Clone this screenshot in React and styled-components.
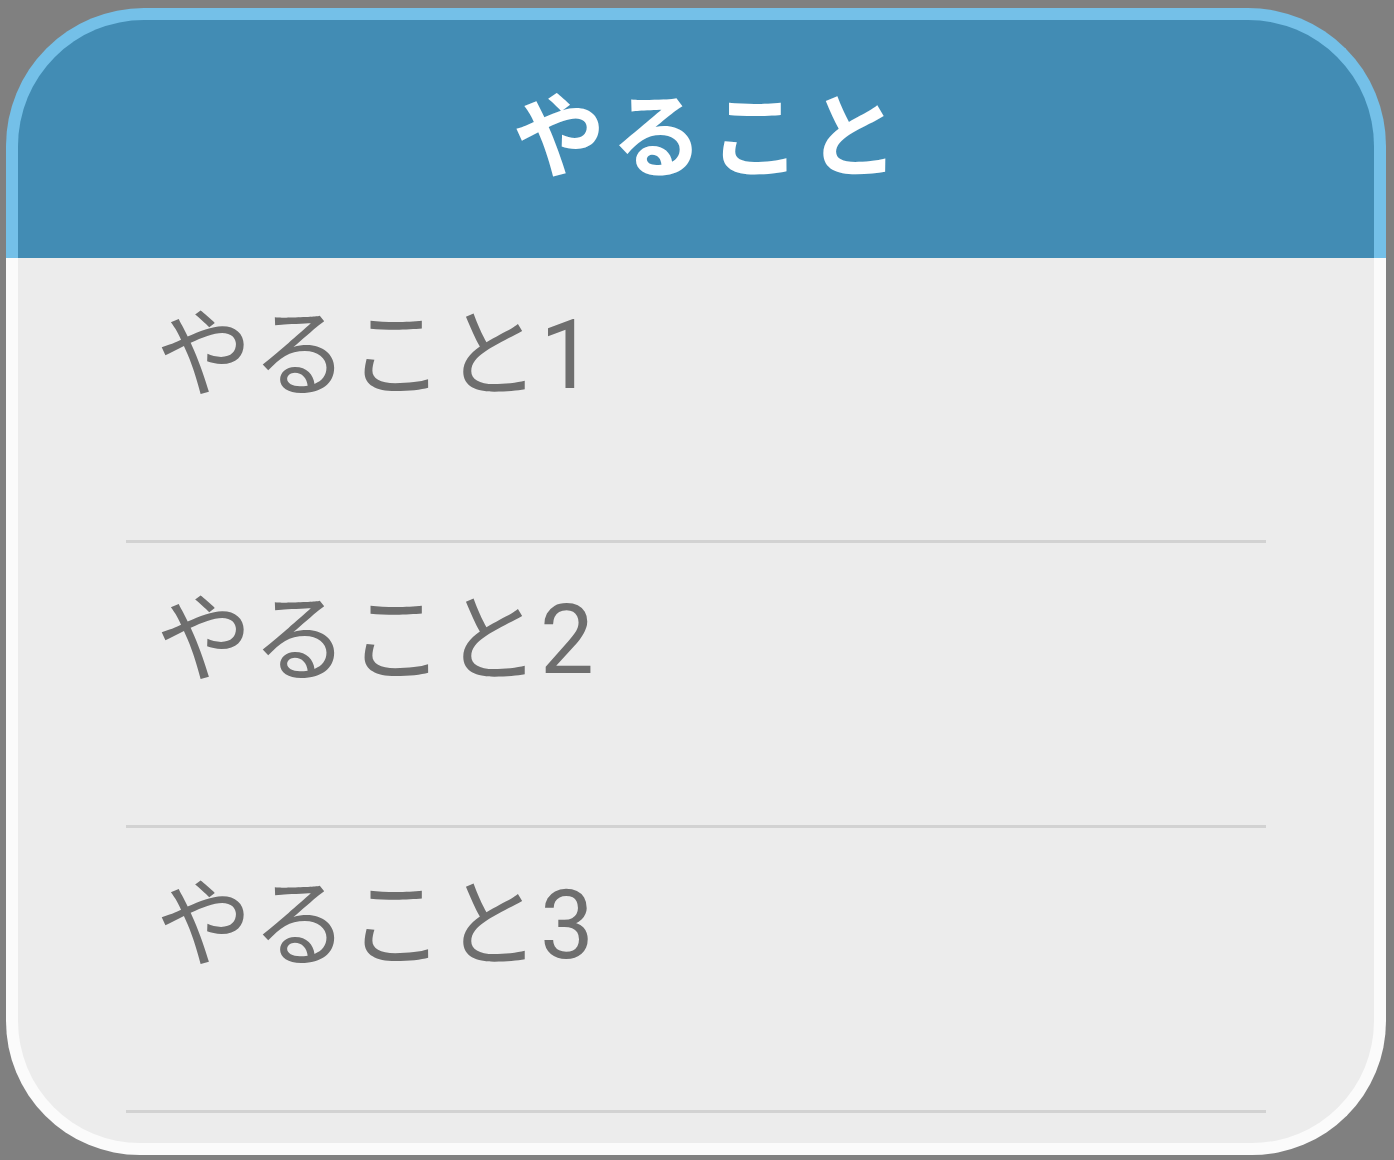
import React from "react";
import styled, { createGlobalStyle } from "styled-components";

const Global = createGlobalStyle`
  html, body { margin: 0; padding: 0; background: #808080; }
  body { font-family: Roboto, "Noto Sans CJK JP", sans-serif; }
`;

const Page = styled.div`
  padding: 8px 8px 3px 6px;
  background: #808080;
`;

const Card = styled.div`
  width: 1380px;
  display: flex;
  flex-direction: column;
`;

const Header = styled.div`
  height: 238px;
  background: #428cb4;
  border: 12px solid #74c0e8;
  border-bottom: none;
  border-radius: 138px 138px 0 0;
  display: flex;
  align-items: center;
  justify-content: center;
`;

const Title = styled.h1`
  margin: 0 0 0 26px;
  color: #ffffff;
  font-family: Roboto, "Noto Sans CJK JP", sans-serif;
  font-weight: 700;
  font-size: 92px;
  line-height: 92px;
  letter-spacing: 6px;
`;

const Body = styled.ul`
  list-style: none;
  margin: 0;
  padding: 0 108px 30px;
  background: #ececec;
  border: 12px solid #fbfbfb;
  border-top: none;
  border-radius: 0 0 134px 134px;
`;

const Item = styled.li`
  height: 282px;
  box-sizing: content-box;
  border-bottom: 3px solid #d2d2d2;
  padding-left: 30px;
  color: #6e6e6e;
  font-size: 96px;
  line-height: 96px;
  display: flex;
  align-items: flex-start;
`;

const ItemText = styled.span`
  margin-top: 49px;
`;

const items = ["やること1", "やること2", "やること3"];

export default function App() {
  return (
    <>
      <Global />
      <Page>
        <Card>
          <Header>
            <Title>やること</Title>
          </Header>
          <Body>
            {items.map((t) => (
              <Item key={t}>
                <ItemText>{t}</ItemText>
              </Item>
            ))}
          </Body>
        </Card>
      </Page>
    </>
  );
}
